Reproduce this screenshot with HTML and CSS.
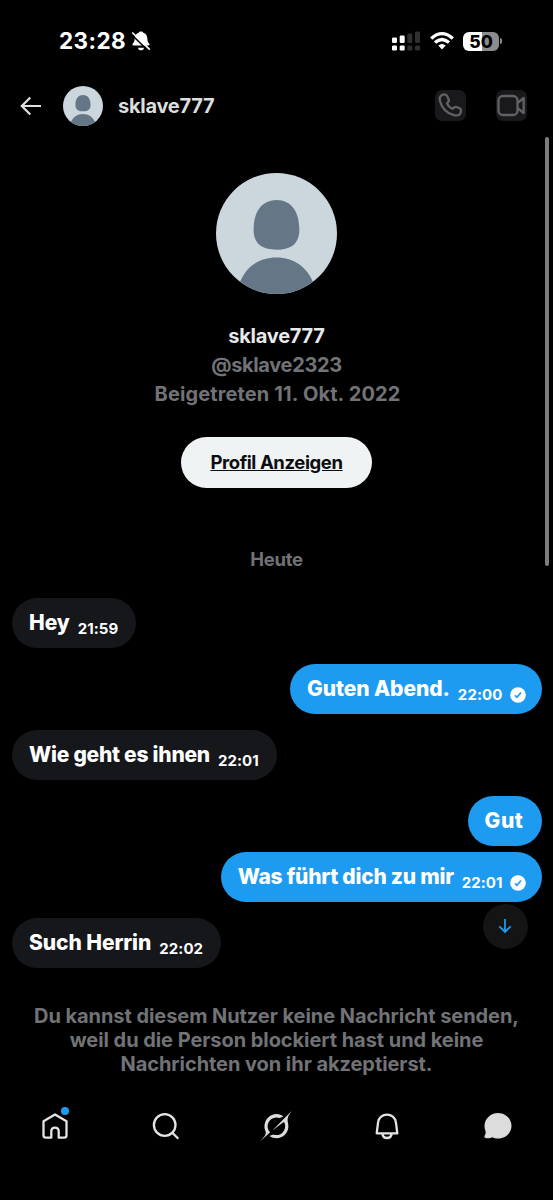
FILE: index.html
```html
<!DOCTYPE html>
<html lang="de">
<head>
<meta charset="utf-8">
<title>sklave777</title>
<link rel="stylesheet" href="styles.css">
</head>
<body>
<div class="screen">
  <div class="status">
    <span class="clock">23:28</span>
    <svg class="muted" viewBox="0 0 20 20"><path d="M2.800 14.600c-1.300 0-1.900-.9-.9-2C3.300 11 3.500 9.800 3.700 7.200 3.900 4 5.400 2.300 7.700 1.700 8.200.1 11.800.1 12.300 1.700c2.300.6 3.800 2.300 4 5.500.2 2.600.4 3.800 1.800 5.400 1 1.100.4 2-.9 2zM7 16.700h6c-.3 3.500-5.700 3.500-6 0z"/><path class="gap" d="M.2 3.200l17.500 17"/><path class="slash" d="M1.200 1.500l17.600 17.200"/></svg>
    <svg class="signal" viewBox="0 0 29 20"><g fill="#fff"><rect x="0" y="6.500" width="5" height="5.500" rx="1.300"/><rect x="7.700" y="4.500" width="5" height="7.500" rx="1.300"/><rect x="0" y="14.500" width="5" height="5" rx="1.300"/><rect x="7.700" y="14.500" width="5" height="5" rx="1.300"/></g><g fill="#303030"><rect x="15.300" y="2.500" width="5" height="9.500" rx="1.300"/><rect x="23" y=".5" width="5" height="11.500" rx="1.300"/><rect x="15.300" y="14.500" width="5" height="5" rx="1.300"/><rect x="23" y="14.500" width="5" height="5" rx="1.300"/></g></svg>
    <svg class="wifi" viewBox="0 0 24 18"><g fill="none" stroke="#fff" stroke-width="3.300"><path d="M1.200 6.500Q12-3.200 22.800 6.500"/><path d="M5 10.600Q12 4.300 19 10.600"/></g><path fill="#fff" d="M8.300 13.600q3.700-3.200 7.400 0L12 17.600z"/></svg>
    <div class="battery"><span>50</span></div><i class="nub"></i>
  </div>
  <header class="top">
    <svg class="back" viewBox="0 0 22 20"><path d="M21 10H2M10.300 1.500L1.800 10l8.500 8.500"/></svg>
    <svg class="avatar small" viewBox="0 0 120 120"><use href="#person"/></svg>
    <h1>sklave777</h1>
    <span class="call"><svg viewBox="0 0 31 31"><path d="M6.600 5.200c1.600-1 4.300-1.100 5.200.3l1.900 4.100c.5 1.100-.2 2.500-1.700 3.800 1.200 2.700 3 4.500 5.500 5.400 1.400-1.600 2.900-2.300 4.100-1.800l3.300 1.500c1.500.8 1.300 4.200-.1 5.700-1.300 1.400-3.900 1.500-6.600.7C11.500 22.900 6.700 18 4.900 10.800 4.300 8.200 4.900 6.200 6.600 5.200z"/></svg></span>
    <span class="call"><svg viewBox="0 0 31 31"><rect x="2.500" y="6" width="19" height="19" rx="4.500"/><path d="M21.500 13L27.700 8v15l-6.200-5"/></svg></span>
  </header>
  <main class="chat">
    <section class="profile">
      <svg class="avatar" viewBox="0 0 120 120"><defs><clipPath id="disc"><circle cx="60" cy="60" r="60"/></clipPath></defs><g id="person" clip-path="url(#disc)"><path fill="#ccd6dd" d="M0 0h120v120H0z"/><path fill="#657786" d="M60 26.700c-15 0-22.700 12-22.700 29.300 0 14 7.700 20 22.700 20s22.700-6 22.700-20C82.700 38.700 75 26.700 60 26.700zM60 83.700c-17 0-30.500 9-37 26.300v10h74v-10C90.500 92.700 77 83.700 60 83.700z"/></g></svg>
      <div class="name">sklave777</div>
      <div class="meta handle">@sklave2323</div>
      <div class="meta joined">Beigetreten 11. Okt. 2022</div>
      <a class="view">Profil Anzeigen</a>
    </section>
    <div class="day">Heute</div>
    <div class="msg in"><span class="text short">Hey</span><time>21:59</time></div>
    <div class="msg out"><span class="text short">Guten Abend.</span><time class="wide">22:00</time><svg class="check" viewBox="0 0 16 16"><circle cx="8" cy="8" r="7.800"/><path d="M5 8.300l2 2 4-4.800"/></svg></div>
    <div class="msg in"><span class="text">Wie geht es ihnen</span><time>22:01</time></div>
    <div class="msg out tight"><span class="text single">Gut</span></div>
    <div class="msg out"><span class="text">Was führt dich zu mir</span><time>22:01</time><svg class="check" viewBox="0 0 16 16"><circle cx="8" cy="8" r="7.800"/><path d="M5 8.300l2 2 4-4.800"/></svg></div>
    <div class="msg in"><span class="text short">Such Herrin</span><time class="wide">22:02</time></div>
    <span class="jump"><svg viewBox="0 0 14 16"><path d="M7 1v13M1.300 8.300L7 14l5.700-5.700"/></svg></span>
    <i class="scrollbar"></i>
  </main>
  <p class="notice"><span>Du kannst diesem Nutzer keine Nachricht senden,</span><span>weil du die Person blockiert hast und keine</span><span>Nachrichten von ihr akzeptierst.</span></p>
  <nav class="tabs">
    <span class="tab"><svg viewBox="0 0 32 32"><path d="M4.500 11.300L16 4.500l11.500 6.800v14c0 1.500-.9 2.400-2.400 2.400H19.700v-6.500c0-4.900-7.400-4.900-7.400 0v6.500H6.900c-1.500 0-2.400-.9-2.400-2.400z"/></svg><i class="dot"></i></span>
    <span class="tab"><svg viewBox="0 0 32 32"><circle cx="14.700" cy="15" r="10.800"/><path d="M22.300 22.700l6 6"/></svg></span>
    <span class="tab"><svg class="solid" viewBox="0 0 33 32"><path d="M12.745 20.540l10.970-8.190c.539-.4 1.307-.244 1.564.38 1.349 3.288.746 7.241-1.938 9.955-2.683 2.714-6.417 3.310-9.830 1.954l-3.728 1.745c5.347 3.697 11.840 2.782 15.898-1.324 3.219-3.255 4.216-7.692 3.284-11.693l.008.009c-1.351-5.878.332-8.227 3.782-13.031L33 0l-4.540 4.590v-.014L12.743 20.544m-2.263 1.987c-3.837-3.707-3.175-9.446.1-12.755 2.420-2.449 6.388-3.448 9.852-1.979l3.720-1.737c-.67-.49-1.530-1.017-2.515-1.387-4.455-1.854-9.789-.931-13.410 2.728-3.483 3.523-4.579 8.940-2.697 13.561 1.405 3.454-.899 5.898-3.220 8.364C1.490 30.200.666 31.074 0 32l10.478-9.466"/></svg></span>
    <span class="tab"><svg viewBox="0 0 32 32"><path d="M5.700 23.300L7 12.800C8.200 2 23.800 2 25 12.800l1.300 10.500zM11.300 23.500c.8 6 8.600 6 9.400 0"/></svg></span>
    <span class="tab"><svg class="solid" viewBox="0 0 32 32"><path d="M16 3C8.500 3 2.500 9 2.500 16.200c0 3.100 1.400 4.800 1.200 6.600-.1 1.500-1.200 2.600-1.300 4 0 .7.400 1 1.200 1.200 2.200.5 5 .2 6.600-.8 1.700.9 3.400 1.300 5.800 1.300 7.500 0 13.500-5.600 13.500-12.700S23.500 3 16 3z"/></svg></span>
  </nav>
</div>
</body>
</html>
```
FILE: styles.css
```css
* { box-sizing: border-box; }
body { margin: 0; background: #000; color: #e7e9ea; font-family: Inter, "Liberation Sans", sans-serif; font-weight: 700; }
svg { display: block; flex: none; overflow: visible; }
.screen { width: 553px; height: 1200px; display: flex; flex-direction: column; overflow: hidden; }
.status { height: 80px; display: flex; align-items: center; padding: 2px 51px 0 59px; color: #fff; }
.clock { font-size: 22.500px; line-height: 28px; width: 72px; letter-spacing: .39px; white-space: nowrap; }
.muted { width: 20px; height: 20px; fill: #fff; }
.gap { stroke: #000; stroke-width: 1.600; }
.slash { stroke: #fff; stroke-width: 1.700; }
.signal { width: 29px; height: 20px; margin-left: auto; }
.wifi { width: 24px; height: 18px; margin-left: 9px; }
.battery { width: 36px; height: 19px; margin-left: 9px; border-radius: 6px; background: linear-gradient(90deg, #fff 52%, #8c8c8c 52%); color: #000; font-size: 17.500px; font-weight: 800; line-height: 19px; text-align: center; }
.nub { width: 2px; height: 6px; margin-left: 1px; border-radius: 0 2px 2px 0; background: #8c8c8c; }
.top { height: 51px; display: flex; align-items: center; padding: 0 26px 0 20px; }
.back { width: 22px; height: 20px; fill: none; stroke: #e0e0e0; stroke-width: 2.200; }
.avatar { width: 121px; height: 121px; }
.small { width: 40px; height: 40px; margin: 0 15px 0 21px; }
h1 { margin: 0; flex: 1; font-size: 20px; line-height: 24px; letter-spacing: -.25px; white-space: nowrap; color: #dcdddd; }
.call { width: 31px; height: 31px; border-radius: 7px; background: #19191b; }
.call + .call { margin-left: 30.500px; }
.call svg { width: 31px; height: 31px; fill: none; stroke: #626264; stroke-width: 2.300; stroke-linejoin: round; }
.chat { position: relative; height: 837.500px; display: flex; flex-direction: column; }
.profile { height: 357px; padding-top: 42px; display: flex; flex-direction: column; align-items: center; flex: none; }
.name { margin-top: 27.500px; font-size: 20px; line-height: 29.300px; letter-spacing: -.25px; color: #e7e9ea; }
.meta { font-size: 20px; line-height: 29.300px; color: #717376; white-space: nowrap; }
.handle { letter-spacing: -.34px; }
.joined { letter-spacing: .13px; padding-left: 2px; }
.view { margin-top: 27.500px; width: 191px; height: 51px; border-radius: 26px; background: #eff3f4; color: #0b0d10; font-size: 18.500px; line-height: 51px; letter-spacing: -.4px; text-align: center; text-decoration: underline; white-space: nowrap; }
.day { height: 109.500px; padding-top: 59px; text-align: center; font-size: 18.500px; line-height: 24px; letter-spacing: -.25px; color: #717376; flex: none; }
.msg { height: 50.500px; margin-bottom: 15.600px; border-radius: 26px; display: flex; align-items: center; padding: 0 18px 0 17px; white-space: nowrap; color: #fff; flex: none; }
.in { align-self: flex-start; margin-left: 12px; background: #16171a; }
.out { align-self: flex-end; margin-right: 11.500px; background: #1d9bf0; padding-right: 16px; }
.msg.tight { margin-bottom: 5.500px; padding-right: 18px; }
.text { font-size: 21px; font-weight: 800; line-height: 26px; letter-spacing: -.25px; }
.short { letter-spacing: -.08px; }
.single { letter-spacing: .6px; }
.msg time { margin: 12px 0 0 8px; font-size: 15px; line-height: 20px; letter-spacing: .05px; }
.msg time.wide { letter-spacing: .1px; }
.check { width: 16px; height: 16px; margin: 12px 0 0 7px; fill: #fff; }
.check path { fill: none; stroke: #1d9bf0; stroke-width: 1.700; }
.jump { position: absolute; right: 25.500px; bottom: 20px; width: 45px; height: 45px; border-radius: 50%; background: #141414; display: grid; place-items: center; }
.jump svg { width: 14px; height: 16px; fill: none; stroke: #1d9bf0; stroke-width: 1.800; }
.scrollbar { position: absolute; right: 4px; top: 6px; width: 4px; height: 429px; border-radius: 2px; background: #7c7c7c; }
.notice { margin: 35px 0 0; display: flex; flex-direction: column; align-items: center; font-size: 20px; line-height: 24.300px; letter-spacing: -.06px; color: #717376; white-space: nowrap; }
.tabs { margin-top: 34px; display: grid; grid-template-columns: repeat(5, 1fr); justify-items: center; }
.tab { position: relative; width: 32px; height: 32px; }
.tab svg { width: 32px; height: 32px; fill: none; stroke: #e4e4e4; stroke-width: 2.300; stroke-linejoin: round; }
.tab svg.solid { fill: #dcdcdc; stroke: none; }
.dot { position: absolute; top: -3px; right: 2px; width: 8px; height: 8px; border-radius: 50%; background: #1d9bf0; }
```
